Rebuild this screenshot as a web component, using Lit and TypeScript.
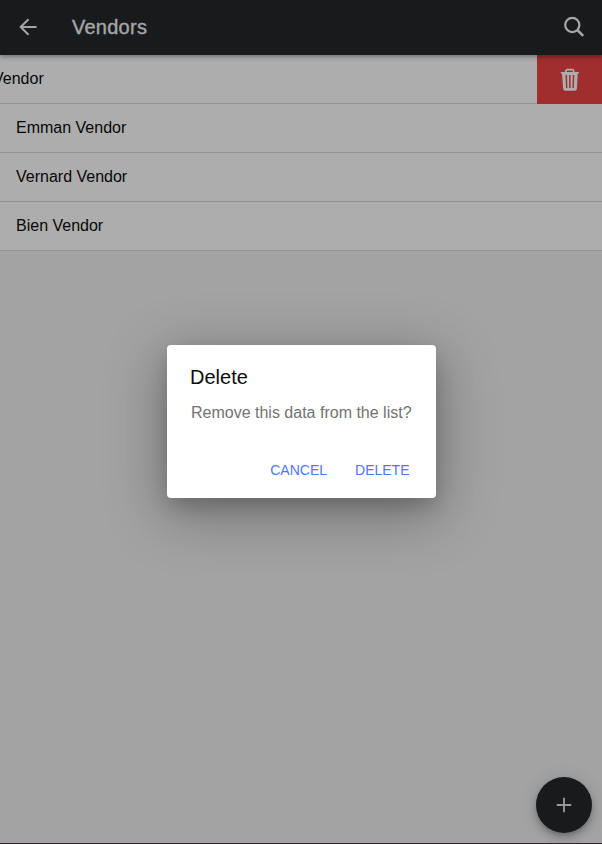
import { LitElement, html, css } from "lit";
import { customElement, state } from "lit/decorators.js";

@customElement("app-root")
export class AppRoot extends LitElement {
  @state() private vendors = ["Emman Vendor", "Vernard Vendor", "Bien Vendor"];

  static styles = css`
    :host {
      display: flex;
      flex-direction: column;
      position: relative;
      box-sizing: border-box;
      height: 844px;
      overflow: hidden;
      background: #f0f0f0;
      border-bottom: 1px solid #2d272b;
      font-family: "Liberation Sans", Arial, sans-serif;
      color: #0c0c0c;
    }
    svg { display: block; }
    .toolbar {
      display: flex;
      align-items: center;
      flex: none;
      height: 55px;
      box-sizing: border-box;
      padding: 0 16px 1px;
      background: #25272a;
      color: #f4f5f8;
      box-shadow: 0 2px 4px rgba(0, 0, 0, 0.28), 0 1px 8px rgba(0, 0, 0, 0.1);
      z-index: 1;
    }
    .title {
      flex: 1;
      margin: 0 0 0 32px;
      font-size: 20px;
      font-weight: 500;
      line-height: 24px;
      letter-spacing: 0.25px;
      -webkit-text-stroke: 0.3px currentColor;
    }
    .row {
      display: flex;
      align-items: center;
      box-sizing: border-box;
      height: 49px;
      padding: 0 16px;
      border-bottom: 1px solid #dcdcdc;
      background: #fff;
      font-size: 16px;
      line-height: 20px;
      white-space: nowrap;
    }
    .sliding {
      display: flex;
      justify-content: flex-end;
      overflow: hidden;
    }
    .sliding .row {
      flex: none;
      width: 537px;
      padding-left: 0;
    }
    .slid { margin-left: -7px; }
    .option {
      display: flex;
      flex: none;
      align-items: center;
      justify-content: center;
      width: 65px;
      height: 49px;
      background: #ed4444;
      color: #fff;
    }
    .fab {
      position: absolute;
      right: 10px;
      bottom: 10px;
      width: 56px;
      height: 56px;
      border-radius: 50%;
      display: flex;
      align-items: center;
      justify-content: center;
      background: #25272a;
      color: #dcdde0;
      box-shadow: 0 3px 5px -1px rgba(0, 0, 0, 0.2), 0 6px 10px rgba(0, 0, 0, 0.14), 0 1px 18px rgba(0, 0, 0, 0.12);
    }
    .overlay {
      position: absolute;
      inset: 0;
      z-index: 2;
      display: flex;
      align-items: center;
      justify-content: center;
      background: rgba(0, 0, 0, 0.32);
    }
    .alert {
      box-sizing: border-box;
      width: 269px;
      height: 153px;
      margin-left: 1px;
      display: flex;
      flex-direction: column;
      border-radius: 4px;
      background: #fff;
      box-shadow: 0 10px 20px -2px rgba(0, 0, 0, 0.18), 0 14px 58px 5px rgba(0, 0, 0, 0.29);
    }
    h2 {
      margin: 0;
      padding: 21px 23px 0;
      font-size: 20px;
      font-weight: 500;
      line-height: 23px;
    }
    p {
      margin: 0;
      padding: 15px 0 0 24px;
      font-size: 16px;
      line-height: 18px;
      color: #737373;
      white-space: nowrap;
    }
    .actions {
      display: flex;
      justify-content: flex-end;
      gap: 28px;
      margin-top: auto;
      padding: 0 26.5px 20px 0;
    }
    button {
      padding: 0;
      border: 0;
      background: none;
      font: 500 14px/16px "Liberation Sans", Arial, sans-serif;
      color: #4d78ff;
      text-transform: uppercase;
    }
  `;

  render() {
    return html`
      <header class="toolbar">
        <svg width="24" height="24" viewBox="0 0 24 24" fill="currentColor">
          <path d="M20.5 11v2H7.1l6.1 6.1-1.4 1.4L3.2 12l8.6-8.5 1.4 1.4L7.1 11z" />
        </svg>
        <h1 class="title">Vendors</h1>
        <svg width="24" height="24" viewBox="0 0 24 24" fill="none" stroke="currentColor">
          <circle cx="10.3" cy="10" r="7.1" stroke-width="2.2" />
          <path d="M15.2 14.9l6 6" stroke-width="2.6" />
        </svg>
      </header>
      <main>
        <div class="sliding">
          <div class="row"><span class="slid">Vendor</span></div>
          <div class="option">
            <svg width="20" height="24" viewBox="0 0 20 24" fill="currentColor" fill-rule="evenodd">
              <path d="M.8 4H5V3.2Q5 .7 7.2 .7h5.2q2.2 0 2.2 2.5V4h4.300v1.600h-1.200L16.900 20.700q-.2 2-2.200 2H5.300q-2 0-2.200-2L2 5.600H.8zM6.600 4h6.400v-.7q0-.9-.8-.9H7.400q-.8 0-.8.9zM5.500 7l.5 13h1.400L7 7zM9.100 7v13h1.500V7zM12.800 7l-.4 13h1.400l.5-13z" />
            </svg>
          </div>
        </div>
        ${this.vendors.map((name) => html`<div class="row">${name}</div>`)}
      </main>
      <div class="fab">
        <svg width="16" height="16" viewBox="0 0 16 16" fill="none" stroke="currentColor" stroke-width="1.9">
          <path d="M8 .7v14.600M.7 8h14.600" />
        </svg>
      </div>
      <div class="overlay">
        <section class="alert" role="alertdialog">
          <h2>Delete</h2>
          <p>Remove this data from the list?</p>
          <div class="actions">
            <button>Cancel</button>
            <button>Delete</button>
          </div>
        </section>
      </div>
    `;
  }
}
